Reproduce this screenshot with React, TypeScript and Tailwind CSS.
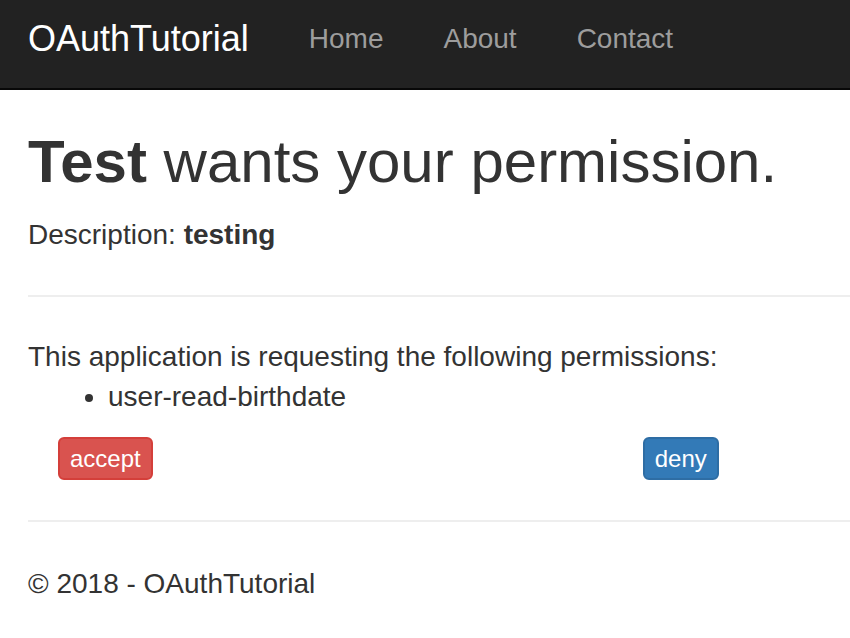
import React from "react";

export default function App() {
    const navLinks = ["Home", "About", "Contact"];

    return (
        <div className="min-h-screen bg-white font-['Liberation_Sans',Arial,sans-serif] text-[#333]">
            {/* Navbar */}
            <nav className="h-[90px] bg-[#222] border-b-2 border-[#080808]">
                <div className="flex items-start pl-[28px] pt-[19px]">
                    <span className="text-[36px] leading-[40px] text-white">OAuthTutorial</span>
                    <ul className="flex ml-[30px]">
                        {navLinks.map((link) => (
                            <li key={link} className="px-[30px] text-[28px] leading-[40px] text-[#9d9d9d]">
                                {link}
                            </li>
                        ))}
                    </ul>
                </div>
            </nav>

            {/* Body */}
            <div className="pl-[28px] text-[28px] leading-[40px]">
                <h2 className="mt-[39px] mb-[20px] text-[60px] leading-[66px] font-normal">
                    <strong className="font-bold">Test</strong> wants your permission.
                </h2>
                <p>
                    Description: <strong className="font-bold">testing</strong>
                </p>

                <hr className="mt-[40px] mb-[40px] border-0 border-t-2 border-[#eee]" />

                <p>This application is requesting the following permissions:</p>
                <ul className="list-disc pl-[80px] mb-[20px]">
                    <li>user-read-birthdate</li>
                </ul>

                <div className="flex">
                    <button className="ml-[30px] h-[43px] px-[10px] rounded-[6px] border-2 border-[#d43f3a] bg-[#d9534f] text-white text-[24px] leading-[24px]">
                        accept
                    </button>
                    <button className="ml-[490px] h-[43px] px-[10px] rounded-[6px] border-2 border-[#2e6da4] bg-[#337ab7] text-white text-[24px] leading-[24px]">
                        deny
                    </button>
                </div>

                <hr className="mt-[40px] mb-[42px] border-0 border-t-2 border-[#eee]" />

                <footer>
                    <p>&copy; 2018 - OAuthTutorial</p>
                </footer>
            </div>
        </div>
    );
}
